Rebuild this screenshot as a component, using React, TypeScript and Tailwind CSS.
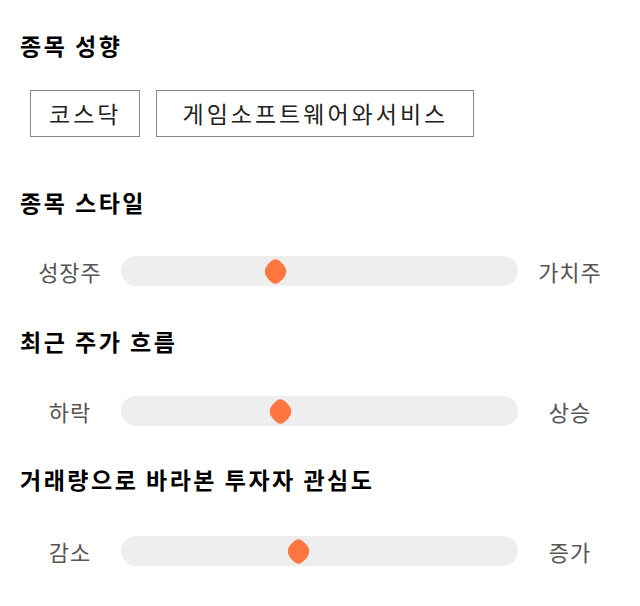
import React from "react";

const font = { fontFamily: '"Noto Sans CJK KR", "Noto Sans", sans-serif' };

function Slider({ left, right, pos }: { left: string; right: string; pos: number }) {
  return (
    <div className="flex items-center px-[30px] h-[30px]">
      <div className="w-[80px] text-center text-[22px] tracking-[1px] text-[#555] leading-none">{left}</div>
      <div className="relative flex-1 ml-[11px] mr-[12px] h-[30px] rounded-full bg-[#eeeeee]">
        <div
          className="absolute top-[4.5px] w-[21px] h-[21px] bg-[#ff7640] rotate-45 rounded-tl-[6px] rounded-br-[6px] rounded-tr-[10px] rounded-bl-[10px]"
          style={{ left: `calc(${pos * 100}% - 10.5px)` }}
        />
      </div>
      <div className="w-[80px] text-center text-[22px] tracking-[1px] text-[#555] leading-none">{right}</div>
    </div>
  );
}

export default function App() {
  return (
    <div className="w-[640px] h-[606px] bg-white px-[20px] pt-[32px]" style={font}>
      <h2 className="text-[23px] font-bold tracking-[2.5px] text-black leading-[26px]">종목 성향</h2>
      <div className="flex gap-[16px] ml-[10px] mt-[32px]">
        <div className="h-[47px] px-[18px] flex items-center border border-[#888] text-[23px] tracking-[3px] text-[#222]">코스닥</div>
        <div className="h-[47px] px-[25px] flex items-center border border-[#888] text-[23px] tracking-[3px] text-[#222]">게임소프트웨어와서비스</div>
      </div>
      <h2 className="text-[23px] font-bold tracking-[2.5px] text-black leading-[26px] mt-[52px]">종목 스타일</h2>
      <div className="mt-[41px] -mx-[20px]">
        <Slider left="성장주" right="가치주" pos={0.39} />
      </div>
      <h2 className="text-[23px] font-bold tracking-[2.5px] text-black leading-[26px] mt-[42px]">최근 주가 흐름</h2>
      <div className="mt-[42px] -mx-[20px]">
        <Slider left="하락" right="상승" pos={0.403} />
      </div>
      <h2 className="text-[23px] font-bold tracking-[2.5px] text-black leading-[26px] mt-[40px]">거래량으로 바라본 투자자 관심도</h2>
      <div className="mt-[44px] -mx-[20px]">
        <Slider left="감소" right="증가" pos={0.448} />
      </div>
    </div>
  );
}
